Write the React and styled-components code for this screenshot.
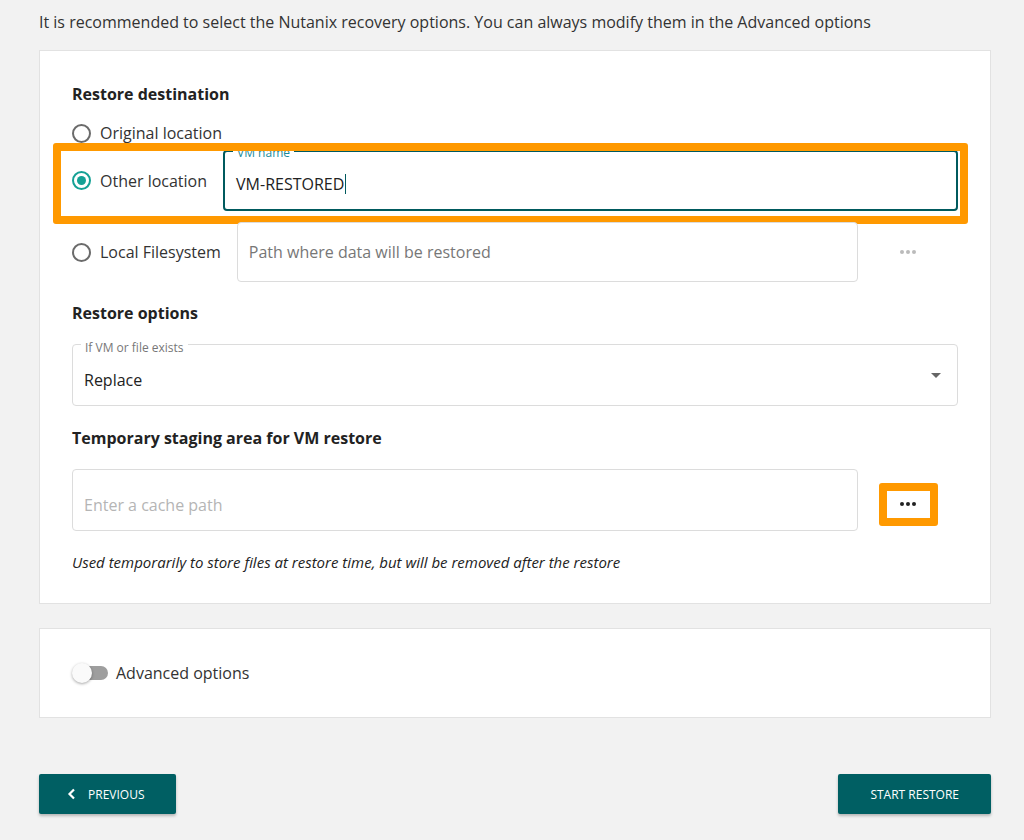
import React from "react";
import styled, { createGlobalStyle } from "styled-components";

const GlobalStyle = createGlobalStyle`
  body {
    margin: 0;
    background: #f2f2f2;
    font-family: "Open Sans", "Noto Sans", sans-serif;
    color: #333;
  }
`;

const Page = styled.div`
  padding: 11px 33px 26px 39px;
`;

const Intro = styled.p`
  margin: 0 0 17px;
  font-size: 16px;
  line-height: 22px;
`;

const Card = styled.section`
  background: #fff;
  border: 1px solid #e2e2e2;
  padding: ${({ $pad }) => $pad || "31px 32px"};
`;

const Heading = styled.h3`
  margin: ${({ $top }) => $top || 0}px 0 0;
  font-size: 16px;
  line-height: 24px;
  font-weight: 700;
  color: #222;
`;

const Row = styled.div`
  position: relative;
  display: flex;
  align-items: center;
  gap: 16px;
  margin-top: ${({ $top }) => $top}px;
  min-height: 24px;
`;

const Radio = styled.label`
  display: flex;
  align-items: center;
  gap: 9px;
  font-size: 16px;
  line-height: 24px;
  color: #333;
  white-space: nowrap;
`;

const Circle = styled.span`
  box-sizing: border-box;
  width: 19px;
  height: 19px;
  border-radius: 50%;
  border: 2px solid ${({ $on }) => ($on ? "#15a195" : "#6b6b6b")};
  display: flex;
  align-items: center;
  justify-content: center;
  &::after {
    content: "";
    display: ${({ $on }) => ($on ? "block" : "none")};
    width: 9px;
    height: 9px;
    border-radius: 50%;
    background: #15a195;
  }
`;

const Field = styled.div`
  position: relative;
  box-sizing: border-box;
  flex: 1;
  height: ${({ $h }) => $h || 61}px;
  display: flex;
  align-items: center;
  padding: ${({ $shift }) => $shift || 0}px 11px 0;
  border: ${({ $active }) => ($active ? "2px solid #005a5e" : "1px solid #dcdcdc")};
  border-radius: 4px;
  font-size: 16px;
  color: ${({ $muted }) => $muted || "#222"};
  background: #fff;
`;

const FloatLabel = styled.span`
  position: absolute;
  top: ${({ $top }) => $top}px;
  left: 8px;
  padding: 0 4px;
  background: #fff;
  font-size: 12px;
  line-height: 14px;
  color: ${({ $color }) => $color || "#777"};
`;

const Caret = styled.span`
  width: 1px;
  height: 20px;
  margin-left: 1px;
  background: #005a5e;
`;

const Arrow = styled.span`
  position: absolute;
  right: 16px;
  top: 28px;
  border-left: 5px solid transparent;
  border-right: 5px solid transparent;
  border-top: 5px solid #666;
`;

const DotsSlot = styled.div`
  box-sizing: border-box;
  width: 84px;
  padding-right: 16px;
  display: flex;
  justify-content: center;
  align-items: center;
`;

const Dots = styled.button`
  box-sizing: border-box;
  flex: none;
  width: ${({ $framed }) => ($framed ? 59 : 42)}px;
  height: ${({ $framed }) => ($framed ? 43 : 26)}px;
  margin-top: ${({ $framed }) => ($framed ? 8 : 0)}px;
  border: ${({ $framed }) => ($framed ? "8px solid #ff9900" : "none")};
  border-radius: 3px;
  background: #fff;
  display: flex;
  align-items: center;
  justify-content: center;
  gap: 2px;
  padding: 0;
  span {
    width: 4px;
    height: 4px;
    border-radius: 50%;
    background: ${({ $framed }) => ($framed ? "#222" : "#bbb")};
  }
`;

const Highlight = styled.div`
  position: absolute;
  left: -19px;
  right: -10px;
  top: -7px;
  bottom: -13px;
  border: 8px solid #ff9900;
  border-radius: 3px;
  pointer-events: none;
`;

const Help = styled.p`
  margin: 21px 0 0;
  font-size: 15px;
  line-height: 20px;
  font-style: italic;
  color: #222;
`;

const Spacer = styled.div`
  height: ${({ $h }) => $h}px;
`;

const Toggle = styled.span`
  position: relative;
  display: inline-block;
  width: 36px;
  height: 14px;
  &::before {
    content: "";
    position: absolute;
    left: 4px;
    right: 0;
    top: 0;
    bottom: 0;
    border-radius: 7px;
    background: #9e9e9e;
  }
  &::after {
    content: "";
    position: absolute;
    left: 0;
    top: -3px;
    width: 20px;
    height: 20px;
    border-radius: 50%;
    background: #fafafa;
    box-shadow: 0 1px 3px rgba(0, 0, 0, 0.35);
  }
`;

const ToggleRow = styled.div`
  display: flex;
  align-items: center;
  gap: 8px;
  font-size: 16px;
  color: #333;
`;

const Footer = styled.div`
  display: flex;
  justify-content: space-between;
  margin-top: 56px;
`;

const Button = styled.button`
  height: 40px;
  padding: ${({ $back }) => ($back ? "0 32px 0 28px" : "0 32px")};
  display: flex;
  align-items: center;
  gap: 11px;
  border: none;
  border-radius: 2px;
  background: #005f63;
  color: #fff;
  font-family: "Open Sans", "Noto Sans", sans-serif;
  font-size: 12px;
  text-transform: uppercase;
  box-shadow: 0 2px 3px rgba(0, 0, 0, 0.25);
`;

const Dotted = ({ framed }) => (
  <Dots $framed={framed}>
    <span />
    <span />
    <span />
  </Dots>
);

export default function App() {
  return (
    <Page>
      <GlobalStyle />
      <Intro>
        It is recommended to select the Nutanix recovery options. You can always modify them in the Advanced options
      </Intro>

      <Card>
        <Heading>Restore destination</Heading>
        <Row $top={15}>
          <Radio>
            <Circle />
            Original location
          </Radio>
        </Row>
        <Row $top={5}>
          <Radio>
            <Circle $on />
            Other location
          </Radio>
          <Field $active $shift={6}>
            <FloatLabel $top={-6} $color="#1a8a99">VM name</FloatLabel>
            VM-RESTORED
            <Caret />
          </Field>
          <Highlight />
        </Row>
        <Row $top={11}>
          <Radio>
            <Circle />
            Local Filesystem
          </Radio>
          <Field $h={60} $muted="#777">
            Path where data will be restored
          </Field>
          <DotsSlot>
            <Dotted />
          </DotsSlot>
        </Row>

        <Heading $top={19}>Restore options</Heading>
        <Row $top={19}>
          <Field $h={62} $shift={9}>
            <FloatLabel $top={-4}>If VM or file exists</FloatLabel>
            Replace
            <Arrow />
          </Field>
        </Row>

        <Heading $top={20}>Temporary staging area for VM restore</Heading>
        <Row $top={19}>
          <Field $h={62} $shift={9} $muted="#b5b5b5">
            Enter a cache path
          </Field>
          <DotsSlot>
            <Dotted framed />
          </DotsSlot>
        </Row>
        <Help>Used temporarily to store files at restore time, but will be removed after the restore</Help>
      </Card>

      <Spacer $h={24} />

      <Card $pad="33px 32px">
        <ToggleRow>
          <Toggle />
          Advanced options
        </ToggleRow>
      </Card>

      <Footer>
        <Button $back>
          <svg width="10" height="12" viewBox="0 0 10 12">
            <path d="M7 1.5 L2.5 6 L7 10.5" fill="none" stroke="#fff" strokeWidth="2.2" />
          </svg>
          Previous
        </Button>
        <Button>Start restore</Button>
      </Footer>
    </Page>
  );
}
